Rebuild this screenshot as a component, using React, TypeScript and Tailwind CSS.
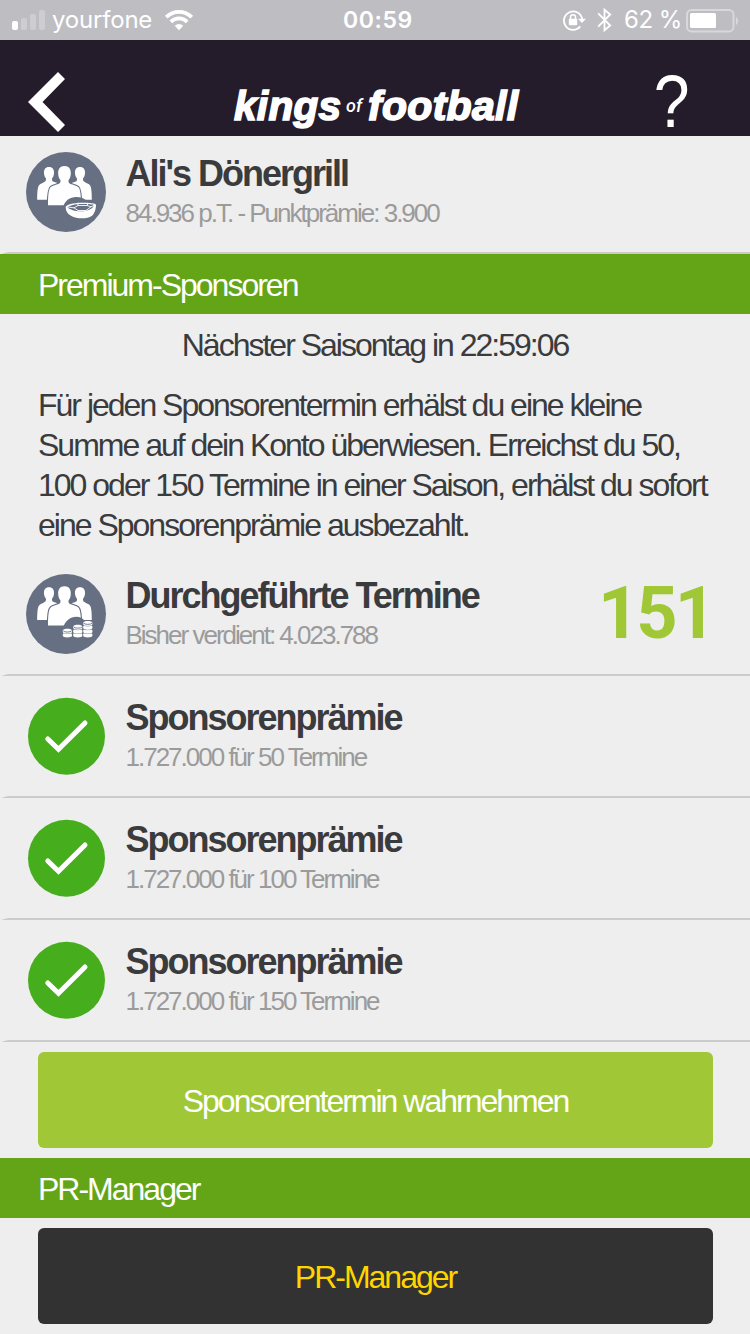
import type { ReactNode } from "react";
import clsx from "clsx";

interface Bonus {
  amount: string;
  appointments: number;
}

const bonuses: Bonus[] = [
  { amount: "1.727.000", appointments: 50 },
  { amount: "1.727.000", appointments: 100 },
  { amount: "1.727.000", appointments: 150 },
];

function StatusBar() {
  return (
    <div className="relative flex h-10 items-center justify-between bg-[#bebdc2] pr-2.5 pl-3 font-['Inter',sans-serif] text-white">
      <div className="flex items-center">
        <svg width="34" height="40" viewBox="0 0 34 40" fill="#fff">
          <rect x="0" y="21" width="6" height="9" rx="2" />
          <g opacity=".25">
            <rect x="9" y="18" width="6" height="12" rx="2" />
            <rect x="18" y="14" width="6" height="16" rx="2" />
            <rect x="27" y="10" width="6" height="20" rx="2" />
          </g>
        </svg>
        <span className="ml-1.5 w-[113px] text-[24px] leading-[42px] tracking-[-0.2px]">yourfone</span>
        <svg width="28" height="40" viewBox="0 0 28 40" fill="none" stroke="#fff" strokeWidth="3.8">
          <path d="M1.3 17.2a18 18 0 0 1 25.4 0" />
          <path d="M5.8 21.8a11.7 11.7 0 0 1 16.4 0" />
          <path d="M14 30.2l-4.2-4.4a6 6 0 0 1 8.4 0z" fill="#fff" stroke="none" />
        </svg>
      </div>
      <span className="absolute left-[343px] text-[23px] leading-[42px] font-semibold tracking-[0.6px]">00:59</span>
      <div className="flex items-center">
        <svg width="24" height="40" viewBox="0 0 24 40" fill="none" stroke="#fff" strokeWidth="1.8">
          <path d="M17.3 26.4a9.200 9.200 0 1 1 1.900-7.400" />
          <path d="M15 18.800h8l-4 4.200z" fill="#fff" stroke="none" />
          <rect x="5.800" y="18.800" width="8.400" height="6.400" rx="1" fill="#fff" stroke="none" />
          <path d="M7.500 19.500v-2.300a2.500 2.500 0 0 1 5 0v2.300" strokeWidth="1.5" />
        </svg>
        <svg className="ml-[10px]" width="16" height="40" viewBox="0 0 16 40" fill="none" stroke="#fff" strokeWidth="1.8">
          <path d="M1.2 13.3l12 12.2-5.7 4.8V9.7l5.7 4.8-12 12.2" />
        </svg>
        <span className="ml-[11px] w-[62px] text-[24px] leading-[42px] tracking-[-0.5px] whitespace-nowrap">62 %</span>
        <svg width="54" height="40" viewBox="0 0 54 40" fill="#fff">
          <rect x="1" y="9.9" width="46.5" height="21.5" rx="4.5" fill="none" stroke="#fff" strokeWidth="2" opacity=".4" />
          <rect x="4" y="13" width="26" height="15" rx="1.5" />
          <path d="M50 17a4.6 4.6 0 0 1 0 8z" opacity=".4" />
        </svg>
      </div>
    </div>
  );
}

function Header() {
  return (
    <header className="relative flex h-24 items-start bg-[#241c2b] text-white">
      <button className="mt-8 ml-7" aria-label="Zurück">
        <svg className="block" width="37" height="60" viewBox="0 0 37 60" fill="#fff">
          <path d="M30 0l7 7-22.5 23L37 53l-7 7L0 30z" />
        </svg>
      </button>
      <h1 className="absolute top-[43px] left-[234px] flex items-baseline leading-[46px] font-bold italic">
        <span className="w-[112px] text-[40.5px] tracking-[0.3px] [-webkit-text-stroke:1.6px_white]">kings</span>
        <span className="relative -top-[8px] w-[22px] font-['Roboto',sans-serif] text-[18px] font-medium">of</span>
        <span className="text-[41px] tracking-[0.3px] [-webkit-text-stroke:1.6px_white]">football</span>
      </h1>
      <button className="absolute top-[25px] left-[651px] scale-x-[0.87] text-[74px] leading-[74px]">?</button>
    </header>
  );
}

function SponsorIcon({ raise = 0, children }: { raise?: number; children: ReactNode }) {
  const side =
    "M23 15c3.7 0 5.3 2.7 5 6.4-.2 2.3-1 3.9-2 5.1 0 1.5.2 2.4.7 2.8 1.800 1.200 5 1.400 7 3V47.700H11.200c0-7.500.4-12.500 1.800-14.500 1.500-1.600 4.700-2.200 6.300-3.900.5-.4.7-1.300.7-2.800-1-1.200-1.800-2.800-2-5.100-.3-3.700 1.300-6.400 5-6.400z";
  return (
    <svg width="80" height="80" viewBox="0 0 80 80">
      <circle cx="40" cy="40" r="40" fill="#667082" />
      <g fill="#fff" transform={`translate(0 ${-raise})`}>
        <path d={side} />
        <path d={side} transform="translate(77 0) scale(-1 1)" />
        <path
          d="M38.5 14c4.600 0 6.600 3.400 6.300 8-.2 2.800-1.100 4.800-2.300 6.300 0 1.500.2 2.600.8 3 2 1.400 7 2 9 3.800 2.200 2 2.700 9 2.700 18.200H22c0-9.200.5-16.200 2.700-18.200 2-1.800 7-2.400 9-3.800.6-.4.8-1.500.8-3-1.200-1.500-2.100-3.500-2.300-6.300-.3-4.600 1.700-8 6.300-8z"
          stroke="#667082"
          strokeWidth="2.400"
          paintOrder="stroke"
        />
      </g>
      {children}
    </svg>
  );
}

function StadiumIcon() {
  return (
    <SponsorIcon>
      <path d="M37 55c2-6.500 7-10 13-10 5 0 8 1.500 11 4l8 2v6l-16 4H37z" fill="#667082" />
      <path d="M39.700 55c0-2 8-4.200 15.300-4.200 8 0 15 .4 15 2.200 0 4-1.500 9-4 10.700-5 3.500-15 3.500-21 0-3.500-1.700-5.300-4.500-5.300-8.700z" fill="#fff" />
      <path d="M41.500 55.200c2-1.700 8-3.200 13.500-3.200 7 0 12.500.2 13 1.200-1.500 3.500-6 6-12.500 6-7 0-11.500-1.500-14-4z" fill="#667082" />
      <path
        d="M42 55l6 .8 4-2.300h9l4 1.300 3-1.500M48 55.800l4 2.700h8l5-3.700M52 53.500V51.500M61 53.500l1-2"
        fill="none"
        stroke="#fff"
        strokeWidth=".9"
      />
    </SponsorIcon>
  );
}

function CoinsIcon() {
  // [x, y] of every coin, each stack from the bottom up
  const coins = [
    [41.4, 60.5], [41.4, 56.6],
    [51.8, 60.5], [51.8, 56.6], [51.8, 52.7],
    [61.8, 60.5], [61.8, 56.6], [61.8, 52.7], [61.8, 48.9],
  ];
  const tops = [[41.4, 56.6], [51.8, 52.7], [61.8, 48.9]];
  return (
    <SponsorIcon raise={1.7}>
      <path d="M37 54c2-7 7-11.300 13.500-11.300 3.500 0 6 1.500 8 3.800h10V64H37z" fill="#667082" />
      {coins.map(([x, y]) => (
        <path
          key={`${x}-${y}`}
          d={`M${x - 4.6} ${y}v1.300c0 2.200 9.200 2.200 9.200 0V${y}c0-2.600-9.200-2.600-9.200 0z`}
          fill="#fff"
          stroke="#667082"
          strokeWidth=".9"
          paintOrder="stroke"
        />
      ))}
      {tops.map(([x, y]) => (
        <path
          key={x}
          d={`M${x - 4.2} ${y + 0.2}c1 1.700 7.400 1.700 8.400 0`}
          fill="none"
          stroke="#667082"
          strokeWidth=".9"
        />
      ))}
    </SponsorIcon>
  );
}

function CheckIcon() {
  return (
    <svg width="80" height="80" viewBox="0 0 80 80">
      <circle cx="40.5" cy="40.2" r="38.5" fill="#46ad1d" />
      <path d="M21.800 43L32.500 53.300 59 27" fill="none" stroke="#fff" strokeWidth="5" strokeLinecap="round" />
    </svg>
  );
}

interface RowProps {
  icon: ReactNode;
  title: string;
  subtitle: string;
  value?: string;
  first?: boolean;
}

function Row({ icon, title, subtitle, value, first }: RowProps) {
  return (
    <div className={clsx("relative flex pl-[26px]", first ? "h-[118px] pt-4" : "h-[122px] pt-5")}>
      {icon}
      <div className="ml-[19.5px]">
        <h3 className="text-[36px] leading-[44px] font-bold text-[#3a3b3d]">{title}</h3>
        <p className="text-[26px] leading-[34px] text-[#9b9b9b]">{subtitle}</p>
      </div>
      {value && (
        <span className="mr-[37px] ml-auto font-['Roboto',sans-serif] text-[72px] leading-20 font-bold tracking-[-3px] text-[#a0c836]">
          {value}
        </span>
      )}
      <div className="absolute bottom-0 left-0 h-0.5 w-full bg-[#cbcbcb] [clip-path:polygon(8px_0,100%_0,100%_100%,1px_100%)]" />
    </div>
  );
}

function SectionTitle({ children }: { children: ReactNode }) {
  return <h2 className="h-15 bg-[#63a517] pl-[38px] text-[32px] leading-[62px] text-white">{children}</h2>;
}

export default function App() {
  return (
    <div className="flex h-[1334px] w-[750px] flex-col overflow-hidden bg-[#eee] font-['Liberation_Sans',Arial,sans-serif]">
      <StatusBar />
      <Header />

      <main className="tracking-[-2px] text-[#3a3b3d]">
        <Row first icon={<StadiumIcon />} title="Ali's Dönergrill" subtitle="84.936 p.T. - Punktprämie: 3.900" />

        <SectionTitle>Premium-Sponsoren</SectionTitle>
        <p className="pt-[11px] text-center text-[32px] leading-10">Nächster Saisontag in 22:59:06</p>
        <p className="pt-5 pl-[38px] text-[32px] leading-10 whitespace-nowrap">
          Für jeden Sponsorentermin erhälst du eine kleine
          <br />
          Summe auf dein Konto überwiesen. Erreichst du 50,
          <br />
          100 oder 150 Termine in einer Saison, erhälst du sofort
          <br />
          eine Sponsorenprämie ausbezahlt.
        </p>

        <div className="mt-[9px]">
          <Row
            icon={<CoinsIcon />}
            title="Durchgeführte Termine"
            subtitle="Bisher verdient: 4.023.788"
            value="151"
          />
          {bonuses.map((bonus) => (
            <Row
              key={bonus.appointments}
              icon={<CheckIcon />}
              title="Sponsorenprämie"
              subtitle={`${bonus.amount} für ${bonus.appointments} Termine`}
            />
          ))}
        </div>

        <button className="my-2.5 ml-[38px] block h-24 w-[675px] rounded-md bg-[#a0c836] pt-0.5 text-[32px] tracking-[-2px] text-white">
          Sponsorentermin wahrnehmen
        </button>
        <SectionTitle>PR-Manager</SectionTitle>
        <button className="mt-2.5 ml-[38px] block h-24 w-[675px] rounded-md bg-[#323232] pt-0.5 text-[32px] tracking-[-2px] text-[#ffd500]">
          PR-Manager
        </button>
      </main>
    </div>
  );
}
